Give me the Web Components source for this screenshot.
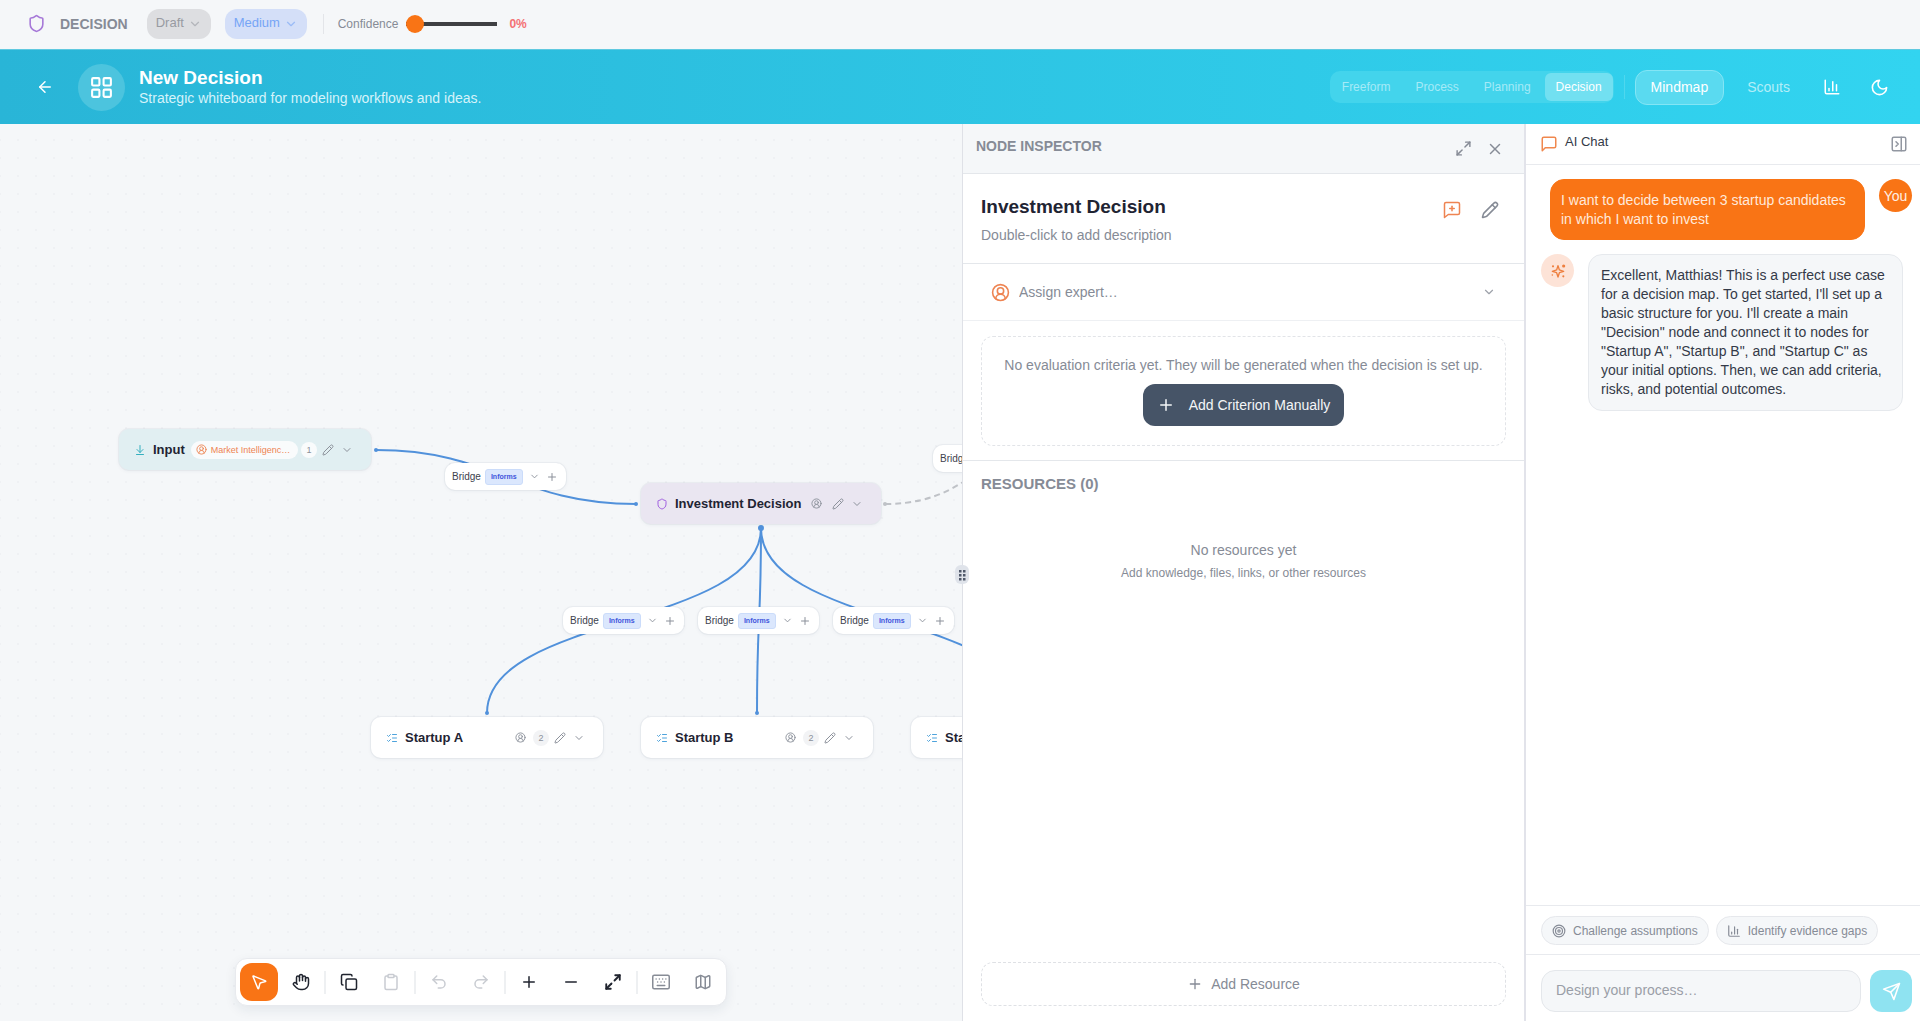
<!DOCTYPE html>
<html lang="en">
<head>
<meta charset="utf-8">
<title>New Decision</title>
<style>
html, body { margin: 0; height: 100%; }
body { font-family: "Liberation Sans", Arial, sans-serif; font-size: 14px; color: #1f2433; background: #f5f7f9; }
</style>
</head>
<body>
<decision-app></decision-app>
<script>
const BASE = `
  *, *::before, *::after { box-sizing: border-box; }
  :host { display: block; }
  :host([hidden]) { display: none; }
  button, select, input { font: inherit; color: inherit; margin: 0; border: 0; background: none; padding: 0; outline: 0; }
  button { cursor: pointer; display: inline-flex; align-items: center; justify-content: center; }
  select { appearance: none; cursor: pointer; }
  h1, h2, h3, p { margin: 0; }
`;
function define(name, css, markup) {
  customElements.define(name, class extends HTMLElement {
    constructor() {
      super();
      this.attachShadow({ mode: 'open' });
    }
    connectedCallback() {
      if (this.shadowRoot.childNodes.length) return;
      const t = document.createElement('template');
      t.innerHTML = '<style>' + BASE + css + '</style>' + (typeof markup === 'function' ? markup(this) : markup);
      this.shadowRoot.append(t.content.cloneNode(true));
    }
  });
}

/* ---------- icons ---------- */
const ICONS = {
  shield: '<path d="M20 13c0 5-3.5 7.5-7.66 8.95a1 1 0 0 1-.67-.01C7.5 20.5 4 18 4 13V6a1 1 0 0 1 1-1c2 0 4.5-1.2 6.24-2.72a1.17 1.17 0 0 1 1.52 0C14.51 3.81 17 5 19 5a1 1 0 0 1 1 1z"/>',
  down: '<path d="m6 9 6 6 6-6"/>',
  back: '<path d="m12 19-7-7 7-7"/><path d="M19 12H5"/>',
  grid: '<rect x="3" y="3" width="7" height="7" rx="1"/><rect x="14" y="3" width="7" height="7" rx="1"/><rect x="14" y="14" width="7" height="7" rx="1"/><rect x="3" y="14" width="7" height="7" rx="1"/>',
  chart: '<path d="M3 3v16a2 2 0 0 0 2 2h16"/><path d="M18 17V9"/><path d="M13 17V5"/><path d="M8 17v-3"/>',
  moon: '<path d="M12 3a6 6 0 0 0 9 9 9 9 0 1 1-9-9Z"/>',
  expand: '<path d="M15 3h6v6"/><path d="M9 21H3v-6"/><path d="M21 3l-7 7"/><path d="m3 21 7-7"/>',
  close: '<path d="M18 6 6 18"/><path d="m6 6 12 12"/>',
  plus: '<path d="M5 12h14"/><path d="M12 5v14"/>',
  minus: '<path d="M5 12h14"/>',
  chat: '<path d="M21 15a2 2 0 0 1-2 2H7l-4 4V5a2 2 0 0 1 2-2h14a2 2 0 0 1 2 2z"/>',
  chatplus: '<path d="M22 16a2 2 0 0 1-2 2H7l-5 4V4a2 2 0 0 1 2-2h16a2 2 0 0 1 2 2z"/><path d="M12 7v6"/><path d="M9 10h6"/>',
  pencil: '<path d="M21.17 6.81a1 1 0 0 0-3.99-3.99L3.84 16.17a2 2 0 0 0-.5.83l-1.32 4.35a.5.5 0 0 0 .62.62l4.35-1.32a2 2 0 0 0 .83-.5z"/><path d="m15 5 4 4"/>',
  user: '<path d="M18 20a6 6 0 0 0-12 0"/><circle cx="12" cy="10" r="4"/><circle cx="12" cy="12" r="10"/>',
  input: '<path d="M12 17V3"/><path d="m6 11 6 6 6-6"/><path d="M19 21H5"/>',
  list: '<path d="M13 5h8"/><path d="M13 12h8"/><path d="M13 19h8"/><path d="m3 17 2 2 4-4"/><path d="m3 7 2 2 4-4"/>',
  panel: '<rect x="3" y="3" width="18" height="18" rx="2"/><path d="M15 3v18"/><path d="m8 9 3 3-3 3"/>',
  sparkle: '<path d="M9.94 14.56 12 21l2.06-6.44L20.500 12.500l-6.440-2.060L12 4 9.940 10.440 3.500 12.500z"/><g fill="currentColor" stroke="none"><circle cx="20.500" cy="4.500" r="2.400"/><circle cx="4.500" cy="5" r="1.600"/><circle cx="20" cy="20" r="1.600"/><circle cx="3.500" cy="18" r="1.200"/></g>',
  target: '<circle cx="12" cy="12" r="10"/><circle cx="12" cy="12" r="6"/><circle cx="12" cy="12" r="2"/>',
  send: '<path d="m22 2-7 20-4-9-9-4Z"/><path d="M22 2 11 13"/>',
  cursor: '<path d="M4.04 4.69a.5.5 0 0 1 .65-.65l16 6.5a.5.5 0 0 1-.06.95l-6.13 1.58a2 2 0 0 0-1.43 1.43l-1.58 6.13a.5.5 0 0 1-.95.06z"/>',
  hand: '<path d="M18 11V6a2 2 0 0 0-4 0"/><path d="M14 10V4a2 2 0 0 0-4 0v2"/><path d="M10 10.500V6a2 2 0 0 0-4 0v8"/><path d="M18 8a2 2 0 1 1 4 0v6a8 8 0 0 1-8 8h-2c-2.800 0-4.500-.86-5.990-2.340l-3.600-3.600a2 2 0 0 1 2.830-2.820L7 15"/>',
  copy: '<rect x="8" y="8" width="14" height="14" rx="2"/><path d="M4 16c-1.100 0-2-.9-2-2V4c0-1.100.9-2 2-2h10c1.100 0 2 .9 2 2"/>',
  clip: '<rect x="8" y="2" width="8" height="4" rx="1"/><path d="M16 4h2a2 2 0 0 1 2 2v14a2 2 0 0 1-2 2H6a2 2 0 0 1-2-2V6a2 2 0 0 1 2-2h2"/>',
  undo: '<path d="M9 14 4 9l5-5"/><path d="M4 9h10.500a5.500 5.500 0 0 1 0 11H11"/>',
  redo: '<path d="m15 14 5-5-5-5"/><path d="M20 9H9.500a5.500 5.500 0 0 0 0 11H13"/>',
  keyboard: '<rect x="1" y="3" width="22" height="18" rx="2"/><path d="M5.500 8h.01M9.800 8h.01M14.200 8h.01M18.500 8h.01M7.500 12h.01M12 12h.01M16.500 12h.01M7 16.500h10"/>',
  map: '<path d="M14.100 5.550a2 2 0 0 0 1.800 0l3.650-1.830A1 1 0 0 1 21 4.620v12.760a1 1 0 0 1-.55.9l-4.550 2.270a2 2 0 0 1-1.800 0l-4.200-2.100a2 2 0 0 0-1.800 0l-3.650 1.830A1 1 0 0 1 3 19.380V6.620a1 1 0 0 1 .55-.9l4.550-2.270a2 2 0 0 1 1.800 0z"/><path d="M15 5.760v15"/><path d="M9 3.240v15"/>',
  grip: '<g fill="currentColor" stroke="none"><rect x="6" y="2" width="5" height="5"/><rect x="14" y="2" width="5" height="5"/><rect x="6" y="10" width="5" height="5"/><rect x="14" y="10" width="5" height="5"/><rect x="6" y="18" width="5" height="5"/><rect x="14" y="18" width="5" height="5"/></g>'
};
define('ui-icon', `
  :host { display: inline-flex; flex: none; }
  svg { display: block; fill: none; stroke: currentColor; stroke-linecap: round; stroke-linejoin: round; }
`, el => {
  const s = el.getAttribute('size') || 16;
  return `<svg width="${s}" height="${s}" viewBox="0 0 24 24" stroke-width="${el.getAttribute('weight') || 2}" aria-hidden="true">${ICONS[el.getAttribute('name')]}</svg>`;
});

/* ---------- top status bar ---------- */
define('pill-select', `
  :host { display: inline-grid; align-items: center; height: 30px; border-radius: 12px; background: var(--pill-bg); color: var(--pill-fg); font-size: 13px; }
  select, ui-icon { grid-area: 1 / 1; }
  select { height: 100%; padding: 0 26px 2px 9px; }
  ui-icon { justify-self: end; margin-right: 9px; pointer-events: none; opacity: .6; }
`, el => `<select aria-label="${el.getAttribute('label')}"><option>${el.getAttribute('value')}</option></select><ui-icon name="down" size="14"></ui-icon>`);

define('status-bar', `
  :host { display: flex; align-items: center; height: 49px; padding: 0 27px 2px; background: #f5f7f9; color: #868b96; }
  .mark { color: #a678d8; }
  h2 { font-size: 14px; font-weight: 700; margin: 0 19px 0 14px; }
  .draft { --pill-bg: #dddee1; --pill-fg: #989ba2; }
  .medium { --pill-bg: #d4dff8; --pill-fg: #76a5f6; margin-left: 14px; }
  .rule { width: 1px; height: 20px; margin: 0 14px 0 16px; background: #e3e5e9; }
  label { display: flex; align-items: center; gap: 8px; font-size: 12px; }
  input { appearance: none; width: 91px; height: 18px; background: linear-gradient(#3f4043, #3f4043) center / 100% 4px no-repeat; }
  input::-webkit-slider-thumb { appearance: none; width: 18px; height: 18px; border-radius: 50%; background: #f97415; }
  output { margin-left: 12px; font-size: 12px; font-weight: 700; color: #f47174; }
`, `
  <ui-icon class="mark" name="shield" size="19"></ui-icon>
  <h2>DECISION</h2>
  <pill-select class="draft" label="Status" value="Draft"></pill-select>
  <pill-select class="medium" label="Priority" value="Medium"></pill-select>
  <span class="rule"></span>
  <label>Confidence <input type="range" min="0" max="100" value="0"></label>
  <output>0%</output>
`);

/* ---------- cyan header ---------- */
define('app-header', `
  :host { display: flex; align-items: center; height: 75px; padding: 0 22px 0 24px; color: #fff; background: linear-gradient(90deg, #29b5d7, #32d4f0); border-top: 1px solid #5fc9e0; }
  .back { width: 42px; height: 38px; }
  .badge { display: grid; place-items: center; width: 47px; height: 47px; margin: 0 14px 0 12px; border-radius: 50%; background: #4cc4de; }
  .titles { flex: 1; min-width: 0; padding-bottom: 1px; }
  h1 { font-size: 19px; line-height: 23px; font-weight: 700; }
  p { font-size: 14px; line-height: 19px; color: #d5f3fa; }
  nav { display: flex; align-items: center; }
  .modes { display: flex; gap: 3px; padding: 2px 1px; border-radius: 10px; background: #43d4ec; font-size: 12px; color: #a5eaf7; }
  .modes button { height: 28px; padding: 0 11px; border-radius: 6px; }
  .modes .on { background: #72e0f1; color: #fff; }
  .rule { width: 1px; height: 24px; margin: 0 10px; background: #4fd7ee; }
  .view { height: 35px; padding: 0 16px; border-radius: 12px; color: #b2eef8; border: 1px solid transparent; }
  .view.on { padding: 0 15px; background: #5adaf0; border-color: #83e5f5; color: #fff; margin-right: 6px; }
  .tool { width: 38px; height: 38px; margin-left: 9px; }
  .tool.chart { margin-left: 6px; }
`, `
  <button class="back" aria-label="Back"><ui-icon name="back" size="18"></ui-icon></button>
  <span class="badge"><ui-icon name="grid" size="25"></ui-icon></span>
  <div class="titles"><h1>New Decision</h1><p>Strategic whiteboard for modeling workflows and ideas.</p></div>
  <nav>
    <div class="modes"><button>Freeform</button><button>Process</button><button>Planning</button><button class="on">Decision</button></div>
    <span class="rule"></span>
    <button class="view on">Mindmap</button>
    <button class="view">Scouts</button>
    <button class="tool chart" aria-label="Charts"><ui-icon name="chart" size="18"></ui-icon></button>
    <button class="tool" aria-label="Dark mode"><ui-icon name="moon" size="19"></ui-icon></button>
  </nav>
`);

/* ---------- canvas pieces ---------- */
define('flow-node', `
  :host { display: flex; align-items: center; width: 232px; height: 41px; padding: 0 18px 0 15px; border-radius: 10px; background: var(--node-bg, #fff); box-shadow: 0 0 0 1px rgba(30, 50, 80, .04), 0 1px 4px rgba(30, 50, 80, .06); color: #8b909a; }
  .kind { color: var(--node-accent, #4ea3dc); }
  h3 { margin: 0 6px 0 7px; font-size: 13px; line-height: 16px; font-weight: 700; color: #1f2433; white-space: nowrap; }
  .actions { display: flex; align-items: center; justify-content: flex-end; gap: 7px; margin-left: auto; }
  .assign:has(+ button) { margin-right: 3px; }
  .pill { display: flex; align-items: center; gap: 4px; height: 18px; padding: 0 8px 0 5px; border-radius: 9px; background: #f9fbfc; color: #ee8452; font-size: 9px; white-space: nowrap; }
  .count { display: grid; place-items: center; min-width: 16px; height: 16px; margin-right: -2px; border-radius: 8px; background: var(--count-bg, #f2f3f5); font-size: 9px; }
`, el => `
  <ui-icon class="kind" name="${el.getAttribute('icon')}" size="12"></ui-icon>
  <h3><slot></slot></h3>
  ${el.hasAttribute('expert') ? `<span class="pill"><ui-icon name="user" size="11"></ui-icon>${el.getAttribute('expert')}</span>` : ''}
  <div class="actions">
    ${el.hasAttribute('expert') ? '' : '<button class="assign" aria-label="Assign expert"><ui-icon name="user" size="11"></ui-icon></button>'}
    ${el.hasAttribute('count') ? `<span class="count">${el.getAttribute('count')}</span>` : ''}
    <button aria-label="Edit"><ui-icon name="pencil" size="12"></ui-icon></button>
    <button aria-label="Expand"><ui-icon name="down" size="12"></ui-icon></button>
  </div>
`);

define('flow-bridge', `
  :host { display: flex; align-items: center; width: 121px; height: 27px; padding: 0 6px 0 7px; border-radius: 10px; background: #fff; box-shadow: 0 0 0 1px rgba(30, 50, 80, .04), 0 1px 4px rgba(30, 50, 80, .06); color: #8b909a; font-size: 10px; }
  .name { color: #3d424e; }
  .kind { margin: 0 4px; padding: 0 5px; line-height: 14px; border: 1px solid #cbdcfa; border-radius: 3px; background: #dbe7fd; color: #3f56dc; font-size: 7px; font-weight: 700; }
  button { width: 16px; height: 16px; margin-left: auto; }
  button + button { margin-left: 2px; }
`, `
  <span class="name">Bridge</span><span class="kind">Informs</span>
  <button aria-label="Details"><ui-icon name="down" size="11"></ui-icon></button>
  <button aria-label="Insert node"><ui-icon name="plus" size="12"></ui-icon></button>
`);

define('tool-bar', `
  :host { display: flex; align-items: center; gap: 4px; padding: 4px; border: 1px solid #e8eaee; border-radius: 12px; background: #fff; box-shadow: 0 4px 12px rgba(30, 50, 80, .08); color: #20242f; }
  button { width: 38px; height: 38px; border-radius: 12px; }
  .on { background: #f97415; color: #fff; }
  button:disabled { color: #c9ccd2; }
  .soft { color: #878c96; }
  i { width: 2px; height: 23px; background: #eef0f2; }
`, `
  <button class="on" aria-label="Select"><ui-icon name="cursor" size="18"></ui-icon></button>
  <button aria-label="Pan"><ui-icon name="hand" size="18"></ui-icon></button><i></i>
  <button aria-label="Copy"><ui-icon name="copy" size="18"></ui-icon></button>
  <button disabled aria-label="Paste"><ui-icon name="clip" size="18"></ui-icon></button><i></i>
  <button disabled aria-label="Undo"><ui-icon name="undo" size="18"></ui-icon></button>
  <button disabled aria-label="Redo"><ui-icon name="redo" size="18"></ui-icon></button><i></i>
  <button aria-label="Zoom in"><ui-icon name="plus" size="18"></ui-icon></button>
  <button aria-label="Zoom out"><ui-icon name="minus" size="18"></ui-icon></button>
  <button aria-label="Fit view"><ui-icon name="expand" size="18" weight="2.5"></ui-icon></button><i></i>
  <button class="soft" aria-label="Shortcuts"><ui-icon name="keyboard" size="18"></ui-icon></button>
  <button class="soft" aria-label="Minimap"><ui-icon name="map" size="18"></ui-icon></button>
`);

define('mind-canvas', `
  :host { position: relative; overflow: hidden; background: radial-gradient(circle, #eff1f4 1px, transparent 1px) 9px 7px / 18px 18px #f5f7f9; }
  .edges { position: absolute; inset: 0; width: 100%; height: 100%; fill: none; stroke: #5191db; stroke-width: 2; }
  .edges .dot { fill: #5191db; stroke: none; }
  .edges .ghost { stroke: #bfc2c7; stroke-dasharray: 6 4; }
  .edges .ghostdot { fill: #bfc2c7; stroke: none; }
  flow-node, flow-bridge { position: absolute; left: var(--x); top: var(--y); }
  .in { width: 252px; --node-bg: #e1eff2; --node-accent: #35afbf; --count-bg: #f9fbfc; }
  .main { width: 240px; --node-bg: #eae6f1; --node-accent: #a05fe0; }
  tool-bar { position: absolute; left: 50%; bottom: 15px; transform: translateX(-50%); }
`, `
  <svg class="edges" aria-hidden="true">
    <path d="M376 326C496 326 516 380 636 380"/>
    <path d="M761 404C761 503 487 491 487 589"/>
    <path d="M761 404C761 503 757 491 757 589"/>
    <path d="M761 404C761 503 1027 491 1027 589"/>
    <path class="ghost" d="M885 380C993 380 993 290 1101 290"/>
    <circle class="dot" cx="376" cy="326" r="2"/><circle class="dot" cx="636" cy="380" r="2"/>
    <circle class="dot" cx="761" cy="404" r="3"/><circle class="dot" cx="487" cy="589" r="2"/><circle class="dot" cx="757" cy="589" r="2"/>
    <circle class="ghostdot" cx="885" cy="380" r="2"/>
  </svg>
  <flow-node class="in" icon="input" expert="Market Intelligenc…" count="1" style="--x:119px;--y:305px">Input</flow-node>
  <flow-node class="main" icon="shield" style="--x:641px;--y:359px">Investment Decision</flow-node>
  <flow-node icon="list" count="2" style="--x:371px;--y:593px">Startup A</flow-node>
  <flow-node icon="list" count="2" style="--x:641px;--y:593px">Startup B</flow-node>
  <flow-node icon="list" count="2" style="--x:911px;--y:593px">Startup C</flow-node>
  <flow-bridge style="--x:445px;--y:339px"></flow-bridge>
  <flow-bridge style="--x:933px;--y:321px"></flow-bridge>
  <flow-bridge style="--x:563px;--y:483px"></flow-bridge>
  <flow-bridge style="--x:698px;--y:483px"></flow-bridge>
  <flow-bridge style="--x:833px;--y:483px"></flow-bridge>
  <tool-bar></tool-bar>
`);

/* ---------- inspector ---------- */
define('node-inspector', `
  :host { position: relative; display: flex; flex-direction: column; border-left: 1px solid #dfe1e7; background: #fff; color: #868b96; }
  .grip { position: absolute; left: -8px; top: 441px; width: 14px; height: 19px; border-radius: 6px; background: #dfe3ea; color: #50596a; }
  header { display: flex; align-items: center; height: 50px; padding: 0 13px; background: #f5f7f9; border-bottom: 1px solid #e4e7eb; }
  header h2 { flex: 1; font-size: 14px; line-height: 16px; padding-bottom: 6px; }
  header button { width: 32px; height: 32px; }
  .title { display: flex; justify-content: space-between; align-items: flex-start; height: 90px; padding: 20px 18px 0; border-bottom: 1px solid #e4e7eb; }
  .title h1 { font-size: 19px; line-height: 26px; color: #1f2433; }
  .title p { margin-top: 6px; line-height: 18px; }
  .title div + div { display: flex; gap: 1px; margin-right: -2px; }
  .title button { width: 37px; height: 32px; }
  .add { color: #ee8452; }
  .expert { display: grid; align-items: center; height: 57px; padding: 0 28px; border-bottom: 1px solid #eef0f3; }
  .expert > * { grid-area: 1 / 1; }
  .expert select { height: 40px; padding-left: 28px; width: 100%; }
  .expert ui-icon { pointer-events: none; }
  .expert .who { color: #ee8452; }
  .expert .arrow { justify-self: end; opacity: .8; }
  .criteria { padding: 15px 18px 14px; border-bottom: 1px solid #e4e7eb; }
  .box { display: flex; flex-direction: column; align-items: center; height: 110px; padding-top: 19px; border: 1px dashed #e2e4e8; border-radius: 12px; line-height: 18px; }
  .box button { height: 42px; margin-top: 10px; padding: 0 14px; gap: 14px; border-radius: 12px; background: #465467; color: #f4f6f8; }
  .resources { flex: 1; display: flex; flex-direction: column; padding: 14px 18px 15px; }
  .resources h2 { font-size: 15px; line-height: 18px; }
  .empty { flex: 1; padding-top: 48px; text-align: center; line-height: 18px; }
  .empty small { display: block; margin-top: 5px; font-size: 12px; }
  .more { height: 44px; gap: 8px; border: 1px dashed #dfe1e5; border-radius: 12px; }
`, `
  <button class="grip" aria-label="Resize panel"><ui-icon name="grip" size="12"></ui-icon></button>
  <header><h2>NODE INSPECTOR</h2>
    <button aria-label="Enlarge"><ui-icon name="expand" size="17"></ui-icon></button>
    <button aria-label="Close"><ui-icon name="close" size="18"></ui-icon></button></header>
  <section class="title">
    <div><h1>Investment Decision</h1><p>Double-click to add description</p></div>
    <div><button class="add" aria-label="Comment"><ui-icon name="chatplus" size="18"></ui-icon></button><button aria-label="Edit"><ui-icon name="pencil" size="18"></ui-icon></button></div>
  </section>
  <section class="expert">
    <select aria-label="Expert"><option>Assign expert…</option></select>
    <ui-icon class="who" name="user" size="19"></ui-icon><ui-icon class="arrow" name="down" size="14"></ui-icon>
  </section>
  <section class="criteria"><div class="box">
    <p>No evaluation criteria yet. They will be generated when the decision is set up.</p>
    <button><ui-icon name="plus" size="18"></ui-icon>Add Criterion Manually</button>
  </div></section>
  <section class="resources">
    <h2>RESOURCES (0)</h2>
    <div class="empty"><p>No resources yet</p><small>Add knowledge, files, links, or other resources</small></div>
    <button class="more"><ui-icon name="plus" size="16"></ui-icon>Add Resource</button>
  </section>
`);

/* ---------- chat ---------- */
define('chat-message', `
  :host { display: flex; gap: 14px; align-items: flex-start; }
  .avatar { display: grid; place-items: center; flex: none; width: 33px; height: 33px; border-radius: 50%; background: #fde3d7; color: #ee7f3f; }
  .bubble { width: 315px; padding: 11px 12px; border: 1px solid #e6e9ed; border-radius: 14px; background: #f5f7f9; color: #343a48; line-height: 19px; }
  :host([from="user"]) { flex-direction: row-reverse; }
  :host([from="user"]) .avatar { background: #f97415; color: #fff0e6; }
  :host([from="user"]) .bubble { padding: 11px 10px 10px; background: #f97415; border-color: #f97415; color: #ffe9db; }
`, el => `<span class="avatar">${el.getAttribute('from') === 'user' ? 'You' : '<ui-icon name="sparkle" size="16"></ui-icon>'}</span><div class="bubble"><slot></slot></div>`);

define('chat-panel', `
  :host { display: flex; flex-direction: column; border-left: 2px solid #e2e3ea; background: #fff; }
  header { display: flex; align-items: center; gap: 7px; height: 41px; padding: 0 12px 0 14px; border-bottom: 1px solid #e8eaee; }
  header h2 { flex: 1; font-size: 13px; line-height: 16px; font-weight: 400; padding-bottom: 4px; color: #343a48; }
  header .mark { color: #f0884e; }
  header button { color: #9297a1; }
  .log { flex: 1; display: flex; flex-direction: column; gap: 14px; padding: 14px 8px 14px 15px; }
  .chips { display: flex; gap: 7px; padding: 10px 15px 9px; border-top: 1px solid #e8eaee; }
  .chips button { height: 29px; padding: 0 10px; gap: 7px; border: 1px solid #e6e8ec; border-radius: 15px; background: #f5f7f9; color: #868b96; font-size: 12px; }
  form { display: flex; gap: 9px; padding: 15px 8px 9px 15px; border-top: 1px solid #e8eaee; }
  input { flex: 1; min-width: 0; height: 42px; padding: 0 14px 3px; border: 1px solid #e4e7eb; border-radius: 14px; background: #f5f7f9; }
  input::placeholder { color: #9a9ea7; opacity: 1; }
  form button { width: 42px; height: 42px; border-radius: 12px; background: #8fe3f1; color: #fff; }
`, `
  <header><ui-icon class="mark" name="chat" size="18"></ui-icon><h2>AI Chat</h2><button aria-label="Collapse chat"><ui-icon name="panel" size="18"></ui-icon></button></header>
  <div class="log">
    <chat-message from="user">I want to decide between 3 startup candidates in which I want to invest</chat-message>
    <chat-message from="ai">Excellent, Matthias! This is a perfect use case for a decision map. To get started, I'll set up a basic structure for you. I'll create a main "Decision" node and connect it to nodes for "Startup A", "Startup B", and "Startup C" as your initial options. Then, we can add criteria, risks, and potential outcomes.</chat-message>
  </div>
  <div class="chips"><button><ui-icon name="target" size="14"></ui-icon>Challenge assumptions</button><button><ui-icon name="chart" size="14"></ui-icon>Identify evidence gaps</button></div>
  <form><input type="text" aria-label="Message" placeholder="Design your process…"><button type="button" aria-label="Send"><ui-icon name="send" size="19"></ui-icon></button></form>
`);

define('decision-app', `
  :host { display: flex; flex-direction: column; height: 100vh; min-height: 640px; }
  main { flex: 1; min-height: 0; display: flex; }
  mind-canvas { flex: 1; min-width: 0; }
  node-inspector { flex: 0 0 562px; }
  chat-panel { flex: 0 0 396px; }
`, `
  <status-bar></status-bar>
  <app-header></app-header>
  <main><mind-canvas></mind-canvas><node-inspector></node-inspector><chat-panel></chat-panel></main>
`);
</script>
</body>
</html>
